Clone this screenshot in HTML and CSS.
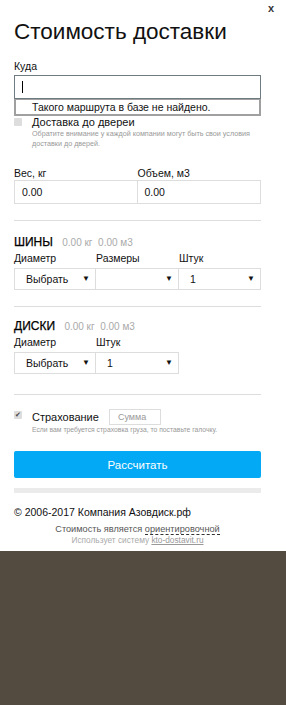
FILE: index.html
```html
<!DOCTYPE html>
<html lang="ru">
<head>
  <meta charset="UTF-8">
  <meta name="viewport" content="width=device-width, initial-scale=1.0">
  <title>Стоимость доставки</title>
  <link rel="stylesheet" href="styles.css">
</head>
<body>
  <div class="panel">
    <a class="close" href="#">x</a>
    <h1>Стоимость доставки</h1>

    <div class="field">
      <label class="label">Куда</label>
      <div class="where">
        <div class="input focus"><span class="caret"></span></div>
        <div class="suggest">Такого маршрута в базе не найдено.</div>
      </div>
    </div>

    <div class="check-row door">
      <span class="box"></span>
      <div>
        <div class="check-title">Доставка до двереи</div>
        <div class="hint">Обратите внимание у каждой компании могут быть свои условия доставки до дверей.</div>
      </div>
    </div>

    <div class="pair">
      <div class="cell">
        <div class="label">Вес, кг</div>
        <div class="input">0.00</div>
      </div>
      <div class="cell">
        <div class="label">Объем, м3</div>
        <div class="input">0.00</div>
      </div>
    </div>

    <hr class="sep">

    <div class="group tires">
      <div class="group-title">ШИНЫ <span class="muted">0.00 кг&nbsp; 0.00 м3</span></div>
      <div class="selects">
        <div class="cell w82">
          <div class="label">Диаметр</div>
          <div class="select">Выбрать</div>
        </div>
        <div class="cell w83">
          <div class="label">Размеры</div>
          <div class="select"></div>
        </div>
        <div class="cell w82">
          <div class="label">Штук</div>
          <div class="select">1</div>
        </div>
      </div>
    </div>

    <hr class="sep">

    <div class="group disks">
      <div class="group-title">ДИСКИ <span class="muted">0.00 кг&nbsp; 0.00 м3</span></div>
      <div class="selects">
        <div class="cell w82">
          <div class="label">Диаметр</div>
          <div class="select">Выбрать</div>
        </div>
        <div class="cell w83">
          <div class="label">Штук</div>
          <div class="select">1</div>
        </div>
      </div>
    </div>

    <hr class="sep last">

    <div class="check-row insure">
      <span class="box checked">&#10004;</span>
      <div>
        <div class="insure-line">
          <span class="check-title">Страхование</span>
          <span class="sum">Сумма</span>
        </div>
        <div class="hint small">Если вам требуется страховка груза, то поставьте галочку.</div>
      </div>
    </div>

    <button class="calc">Рассчитать</button>
    <div class="result"></div>

    <div class="copy">© 2006-2017 Компания Азовдиск.рф</div>
    <div class="note">Стоимость является <span class="dashed">ориентировочной</span></div>
    <div class="note light">Использует систему <a href="#">kto-dostavit.ru</a></div>
  </div>
</body>
</html>
```

FILE: styles.css
```css
body {
  margin: 0;
  background-color: #534b40;
  font-family: "Liberation Sans", Arial, sans-serif;
  color: #111;
}
.panel {
  position: relative;
  background-color: white;
  padding: 18px 25px 5px 14px;
}
.close {
  position: absolute;
  top: 2px;
  right: 12px;
  font-size: 11px;
  font-weight: bold;
  color: #333;
  text-decoration: none;
}
h1 {
  margin: 0;
  font-size: 22.5px;
  font-weight: normal;
  line-height: 28px;
  color: #111;
}
.label {
  display: block;
  font-size: 10.5px;
  line-height: 13px;
  color: #111;
}
.field {
  margin-top: 14px;
}
.field .label {
  margin-bottom: 2px;
}
.where {
  position: relative;
}
.input {
  box-sizing: border-box;
  height: 24px;
  border: 1px solid #ddd;
  padding: 0 7px;
  font-size: 10.5px;
  line-height: 22px;
}
.input.focus {
  border-color: #6e7c82;
}
.caret {
  display: inline-block;
  width: 1px;
  height: 12px;
  background: #000;
  vertical-align: middle;
  margin-top: -2px;
}
.suggest {
  position: absolute;
  left: 0;
  right: 0;
  top: 24px;
  z-index: 2;
  background: white;
  border: 2px solid #a0a0a0;
  border-top-width: 1px;
  padding: 0 0 0 16px;
  font-size: 10.5px;
  line-height: 14px;
}
.check-row {
  display: flex;
  gap: 10px;
}
.door {
  margin-top: 17px;
}
.box {
  flex: none;
  box-sizing: border-box;
  width: 8px;
  height: 8px;
  margin-top: 2px;
  background: #ddd;
  border-radius: 1px;
  font-size: 7px;
  line-height: 8px;
  color: #444;
  text-align: center;
}
.check-title {
  font-size: 11px;
  line-height: 13px;
}
.hint {
  font-size: 7.2px;
  line-height: 10px;
  color: #999;
}
.hint.small {
  font-size: 6.8px;
}
.pair {
  display: flex;
  margin-top: 18px;
}
.cell {
  flex: 1;
}
.pair .cell + .cell .input {
  border-left: none;
}
.sep {
  margin: 16px 0 0;
  border: none;
  border-top: 1px solid #ddd;
}
.sep.last {
  margin-top: 20px;
}
.group {
  margin-top: 14px;
}
.group.disks {
  margin-top: 12px;
}
.group-title {
  font-size: 12px;
  line-height: 14px;
  color: #000;
  margin-bottom: 2px;
  -webkit-text-stroke: 0.25px #000;
}
.muted {
  font-size: 10px;
  color: #aaa;
  margin-left: 6px;
  -webkit-text-stroke: 0;
}
.selects {
  display: flex;
}
.selects .label {
  margin-bottom: 3px;
}
.w82 {
  flex: none;
  width: 82px;
}
.w83 {
  flex: none;
  width: 83px;
}
.selects .cell + .cell .select {
  border-left: none;
}
.select {
  position: relative;
  box-sizing: border-box;
  height: 22px;
  border: 1px solid #ddd;
  padding: 0 0 0 11px;
  font-size: 10.5px;
  line-height: 20px;
}
.select::after {
  content: "\25BC";
  position: absolute;
  right: 5px;
  top: 0;
  font-size: 8px;
  color: #111;
}
.insure {
  margin-top: 14px;
}
.insure .box {
  margin-top: 2px;
}
.insure-line {
  display: flex;
  align-items: center;
  gap: 10px;
  height: 16px;
}
.sum {
  box-sizing: border-box;
  width: 52px;
  height: 16px;
  border: 1px solid #ddd;
  font-size: 9px;
  line-height: 14px;
  padding-left: 8px;
  color: #999;
}
.calc {
  display: block;
  width: 100%;
  height: 27px;
  margin-top: 16px;
  border: none;
  border-radius: 2px;
  background-color: #03a9f4;
  color: white;
  font-family: "Liberation Sans", Arial, sans-serif;
  font-size: 11.5px;
  cursor: pointer;
}
.result {
  height: 5px;
  margin-top: 10px;
  background: #ebebeb;
}
.copy {
  margin-top: 13px;
  font-size: 10.5px;
  line-height: 13px;
  color: #111;
}
.note {
  text-align: center;
  font-size: 9.2px;
  line-height: 11px;
  color: #555;
  margin-top: 5px;
}
.note.light {
  margin-top: 0;
  font-size: 8.3px;
  color: #aaa;
}
.note a {
  color: #999;
}
.dashed {
  border-bottom: 1px dashed #333;
}
```
